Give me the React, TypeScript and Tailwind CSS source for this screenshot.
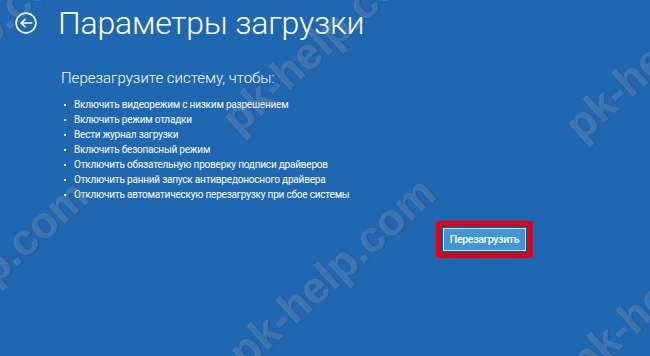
const options = [
  'Включить видеорежим с низким разрешением',
  'Включить режим отладки',
  'Вести журнал загрузки',
  'Включить безопасный режим',
  'Отключить обязательную проверку подписи драйверов',
  'Отключить ранний запуск антивредоносного драйвера',
  'Отключить автоматическую перезагрузку при сбое системы',
]

// watermark copies laid over the screen
const marks = [
  'left-[-22px] top-[38px]',
  'left-[325px] top-[38px]',
  'left-[668px] top-[45px]',
  'left-[-15px] top-[275px]',
  'left-[332px] top-[272px]',
  'left-[672px] top-[282px]',
]

function BackIcon() {
  return (
    <svg viewBox="0 0 24 24" className="h-[22px] w-[22px]" fill="none" stroke="white" strokeWidth={1.8}>
      <circle cx="12" cy="12" r="10.8" />
      <path d="M18 12H6.8M10.8 8L6.8 12L10.8 16" strokeLinecap="square" />
    </svg>
  )
}

export default function App() {
  return (
    <div className="relative h-[356px] w-[650px] overflow-hidden bg-[#2067b2] font-['Roboto','Noto_Sans',sans-serif] text-white">
      <div className="flex items-center pl-[15px] pt-[3px]">
        <BackIcon />
        <h1 className="ml-[21px] text-[32px] leading-[40px] font-light tracking-[-0.2px]">Параметры загрузки</h1>
      </div>

      <div className="ml-[61px] mt-[25px] w-[472px]">
        <p className="text-[15px] leading-[20px] font-light">Перезагрузите систему, чтобы:</p>
        <ul className="mt-[9px]">
          {options.map((o) => (
            <li key={o} className="flex h-[15px] items-center">
              <span className="ml-[3px] h-[2px] w-[2px] bg-white" />
              <span className="ml-[8px] text-[10px] leading-[15px] tracking-[-0.2px]">{o}</span>
            </li>
          ))}
        </ul>
        <div className="mt-[19px] flex justify-end">
          <div className="rounded-[3px] border-[5px] border-[#e8000e] bg-[#1d4f8f] p-[2px]">
            <button className="flex h-[23px] w-[83px] items-center justify-center border border-[#cfe5f6] bg-[#3f96d8] text-[10.5px] font-medium tracking-[-0.3px] text-white">
              Перезагрузить
            </button>
          </div>
        </div>
      </div>

      {marks.map((m) => (
        <div
          key={m}
          className={`pointer-events-none absolute ${m} -translate-x-1/2 -translate-y-1/2 -rotate-[42deg] whitespace-nowrap font-['Liberation_Sans',sans-serif] text-[44px] font-bold text-white/[0.18] [text-shadow:1px_1px_1px_rgba(0,0,0,0.12)]`}
        >
          pk-help.com
        </div>
      ))}
    </div>
  )
}
